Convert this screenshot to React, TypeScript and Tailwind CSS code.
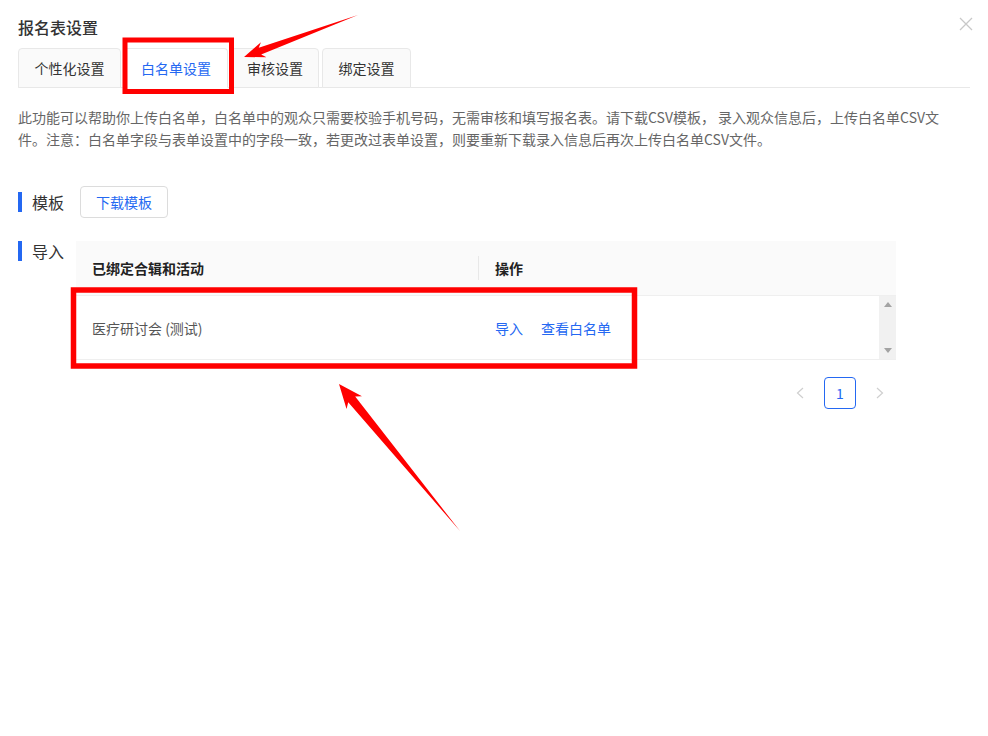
import React from 'react';

const tabs = [
    { label: '个性化设置', w: 'w-[103px]' },
    { label: '白名单设置', w: 'w-[104px]' },
    { label: '审核设置', w: 'w-[88px]' },
    { label: '绑定设置', w: 'w-[89px]' },
];

// tapered arrow from tail to tip, like screenshot-tool annotations
function arrowPoints(tx: number, ty: number, px: number, py: number, head = 20, wing = 9, shaft = 4) {
    const dx = px - tx;
    const dy = py - ty;
    const len = Math.hypot(dx, dy);
    const ux = dx / len;
    const uy = dy / len;
    const nx = -uy;
    const ny = ux;
    const j = (d: number, w: number) => `${px - ux * d + nx * w},${py - uy * d + ny * w}`;
    return [`${tx},${ty}`, j(head, shaft), j(head + 4, wing), `${px},${py}`, j(head + 4, -wing), j(head, -shaft)].join(' ');
}

function SectionLabel({ children }: { children: React.ReactNode }) {
    return (
        <div className="flex h-5 w-[62px] shrink-0 items-center gap-2.5">
            <span className="h-5 w-1 bg-[#2468f2]" />
            <span className="text-base leading-5 text-[#333]">{children}</span>
        </div>
    );
}

export default function App() {
    return (
        <div
            className="relative h-[736px] w-[988px] overflow-hidden bg-white px-[18px] pt-[15px] text-[#333]"
            style={{ fontFamily: '"Noto Sans CJK SC", "Noto Sans", sans-serif' }}
        >
            {/* close */}
            <button className="absolute top-[17px] right-[15px] text-[#c8c8c8]">
                <svg width="14" height="14" viewBox="0 0 14 14" fill="none" stroke="currentColor" strokeWidth="1.3">
                    <path d="M1 1 L13 13 M13 1 L1 13" />
                </svg>
            </button>

            <h1 className="h-6 text-base leading-6 font-medium text-[#333]">报名表设置</h1>

            {/* tabs */}
            <div className="mt-[9px] flex h-10 w-[952px] gap-[3px] border-b border-[#e8e8e8]">
                {tabs.map((t, i) => (
                    <div
                        key={t.label}
                        className={`-mb-px flex h-10 items-center justify-center rounded-t border border-[#e8e8e8] text-sm ${t.w} ${
                            i === 1 ? 'border-b-white bg-white text-[#2468f2]' : 'bg-[#fafafa] text-[#333]'
                        }`}
                    >
                        {t.label}
                    </div>
                ))}
            </div>

            {/* description */}
            <p className="mt-[18px] text-sm leading-[22px] text-[#666]">
                此功能可以帮助你上传白名单，白名单中的观众只需要校验手机号码，无需审核和填写报名表。请下载CSV模板， 录入观众信息后，上传白名单CSV文
                <br />
                件。注意：白名单字段与表单设置中的字段一致，若更改过表单设置，则要重新下载录入信息后再次上传白名单CSV文件。
            </p>

            {/* template */}
            <div className="mt-9 flex items-center">
                <SectionLabel>模板</SectionLabel>
                <button className="h-8 w-[88px] rounded border border-[#dcdcdc] bg-white text-sm text-[#2468f2]">下载模板</button>
            </div>

            {/* import */}
            <div className="mt-[23px] flex items-start">
                <div className="w-[58px]">
                    <SectionLabel>导入</SectionLabel>
                </div>
                <div className="w-[820px]">
                    <div className="flex h-[54px] items-center bg-[#fafafa] text-sm font-bold text-[#222]">
                        <div className="w-[402px] pl-4">已绑定合辑和活动</div>
                        <div className="h-6 w-px bg-[#e8e8e8]" />
                        <div className="pl-4">操作</div>
                    </div>
                    <div className="flex h-[65px] border-t border-b border-[#efefef]">
                        <div className="flex flex-1 items-center text-sm text-[#555]">
                            <div className="w-[403px] pl-4">医疗研讨会 (测试)</div>
                            <div className="flex gap-[18px] pl-4 text-[#2468f2]">
                                <span>导入</span>
                                <span>查看白名单</span>
                            </div>
                        </div>
                        <div className="flex w-[17px] flex-col items-center justify-between bg-[#f1f1f1] py-[6px]">
                            <svg width="8" height="5" viewBox="0 0 8 5">
                                <path d="M4 0 L8 5 L0 5 Z" fill="#a3a3a3" />
                            </svg>
                            <svg width="8" height="5" viewBox="0 0 8 5">
                                <path d="M0 0 L8 0 L4 5 Z" fill="#a3a3a3" />
                            </svg>
                        </div>
                    </div>

                    {/* pager */}
                    <div className="mt-[17px] flex justify-end gap-2">
                        <div className="flex h-8 w-8 items-center justify-center text-[#cfcfcf]">
                            <svg width="8" height="12" viewBox="0 0 8 12" fill="none" stroke="currentColor" strokeWidth="1.2">
                                <path d="M7 1 L1.5 6 L7 11" />
                            </svg>
                        </div>
                        <div className="flex h-8 w-8 items-center justify-center rounded border border-[#2468f2] text-sm text-[#2468f2]">1</div>
                        <div className="flex h-8 w-8 items-center justify-center text-[#cfcfcf]">
                            <svg width="8" height="12" viewBox="0 0 8 12" fill="none" stroke="currentColor" strokeWidth="1.2">
                                <path d="M1 1 L6.5 6 L1 11" />
                            </svg>
                        </div>
                    </div>
                </div>
            </div>

            {/* red annotations */}
            <svg className="pointer-events-none absolute inset-0" width="988" height="736">
                <rect x="125" y="40" width="106.5" height="51.5" fill="none" stroke="#ff0000" strokeWidth="5" />
                <rect x="73.5" y="290" width="561" height="76" fill="none" stroke="#ff0000" strokeWidth="5.5" />
                <polygon points={arrowPoints(358, 15, 244, 57, 17, 8, 3.5)} fill="#ff0000" />
                <polygon points={arrowPoints(460, 531, 339, 384, 20, 10, 4.5)} fill="#ff0000" />
            </svg>
        </div>
    );
}
